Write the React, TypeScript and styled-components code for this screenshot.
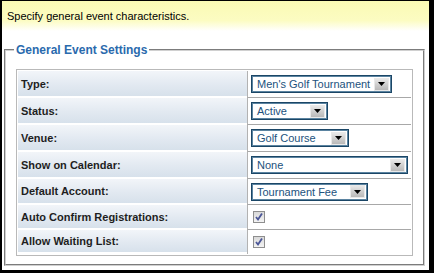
import { FC } from "react"
import styled, { createGlobalStyle } from "styled-components"

const GlobalStyle = createGlobalStyle`
  body {
    margin: 0;
    background: #fff;
    font-family: "Liberation Sans", Arial, sans-serif;
  }
`

const Frame = styled.div`
  width: 434px;
  height: 273px;
  box-sizing: border-box;
  border-style: solid;
  border-color: #000;
  border-width: 1px 5px 3px 2px;
  background: #fff;
  overflow: hidden;
`

const Hint = styled.div`
  height: 30px;
  display: flex;
  align-items: center;
  padding-left: 5px;
  font-size: 11px;
  color: #000;
  background: linear-gradient(to bottom, #fafab4 0%, #fcfcc2 65%, #ffffff 100%);
`

const Fieldset = styled.fieldset`
  margin: 12px 4px 0 2px;
  padding: 12px 10px 8px 10px;
  border: 2px groove #d0d0d0;
  min-width: 0;
`

const Legend = styled.legend`
  margin-left: -2px;
  padding: 0 2px;
  font-size: 12px;
  line-height: 14px;
  font-weight: bold;
  color: #2a6aad;
`

const Table = styled.div`
  border: 1px solid #b9b9b9;
  padding: 1px;
  display: flex;
  flex-direction: column;
`

const Row = styled.div<{ $height: number }>`
  display: grid;
  grid-template-columns: 229px 1fr;
  height: ${({ $height }) => $height}px;
`

const Label = styled.div`
  display: flex;
  align-items: center;
  padding-left: 3px;
  border-bottom: 2px solid #fff;
  background: linear-gradient(to bottom, #f2f5f9 0%, #e2e9f1 55%, #d7e1eb 100%);
  font-size: 11px;
  font-weight: bold;
  color: #1e1e1e;
`

const Value = styled.div<{ $last?: boolean }>`
  display: flex;
  align-items: center;
  padding-left: 3px;
  border-left: 1px solid #b2b2b2;
  border-bottom: ${({ $last }) => ($last ? "none" : "1px solid #a8a8a8")};
`

const SelectBox = styled.div<{ $width: number }>`
  width: ${({ $width }) => $width}px;
  height: 18px;
  box-sizing: border-box;
  display: flex;
  align-items: center;
  justify-content: space-between;
  border: 1px solid #1b4666;
  box-shadow: inset 0 0 0 1px #5b84a1;
  padding: 0 2px 0 5px;
  background: #fff;
  font-size: 11px;
  color: #22527d;
`

const ArrowButton = styled.span`
  width: 15px;
  height: 13px;
  box-sizing: border-box;
  display: flex;
  align-items: center;
  justify-content: center;
  border: 1px solid #e9e9e9;
  background: linear-gradient(to bottom, #e8e8e8 0%, #cfcfcf 50%, #b9b9b9 100%);
`

const CheckBox = styled.span`
  margin-left: 2px;
  width: 12px;
  height: 12px;
  box-sizing: border-box;
  display: flex;
  align-items: center;
  justify-content: center;
  border: 1px solid #8e8e8e;
  background: linear-gradient(to bottom, #d9d9d9 0%, #f3f3f3 100%);
`

const Select: FC<{ value: string; width: number }> = ({ value, width }) => (
  <SelectBox $width={width}>
    <span>{value}</span>
    <ArrowButton>
      <svg width="7" height="4" viewBox="0 0 7 4">
        <path d="M0 0 H7 L3.5 4 Z" fill="#000" />
      </svg>
    </ArrowButton>
  </SelectBox>
)

const Check: FC = () => (
  <CheckBox>
    <svg width="10" height="10" viewBox="0 0 10 10">
      <path d="M2 5 L4 7.5 L8 1.5" fill="none" stroke="#4b5697" strokeWidth="1.8" />
    </svg>
  </CheckBox>
)

const rows = [
  { label: "Type:", height: 27, select: { value: "Men's Golf Tournament", width: 141 } },
  { label: "Status:", height: 27, select: { value: "Active", width: 77 } },
  { label: "Venue:", height: 27, select: { value: "Golf Course", width: 98 } },
  { label: "Show on Calendar:", height: 27, select: { value: "None", width: 157 } },
  { label: "Default Account:", height: 26, select: { value: "Tournament Fee", width: 117 } },
  { label: "Auto Confirm Registrations:", height: 25 },
  { label: "Allow Waiting List:", height: 24 },
]

const App: FC = () => (
  <>
    <GlobalStyle />
    <Frame>
      <Hint>Specify general event characteristics.</Hint>
      <Fieldset>
        <Legend>General Event Settings</Legend>
        <Table>
          {rows.map((row, i) => (
            <Row key={row.label} $height={row.height}>
              <Label>{row.label}</Label>
              <Value $last={i === rows.length - 1}>
                {row.select ? <Select {...row.select} /> : <Check />}
              </Value>
            </Row>
          ))}
        </Table>
      </Fieldset>
    </Frame>
  </>
)

export default App
